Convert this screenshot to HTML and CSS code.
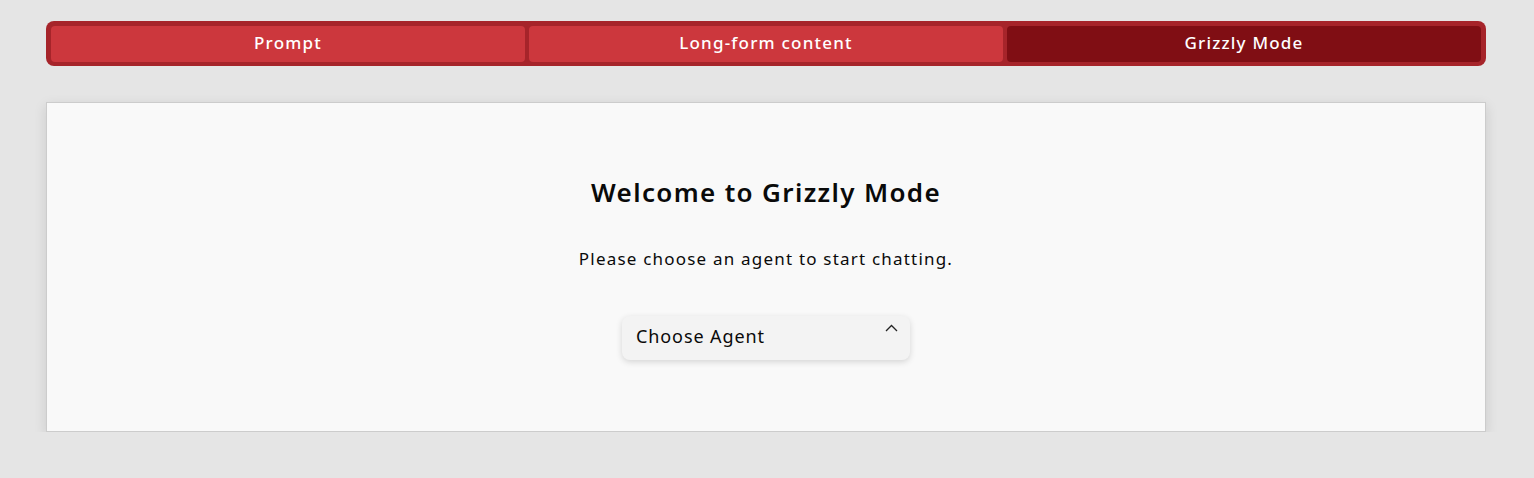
FILE: index.html
```html
<!DOCTYPE html>
<html lang="en">
<head>
<meta charset="utf-8">
<title>Grizzly Mode</title>
<link rel="stylesheet" href="styles.css">
</head>
<body>
<div class="page">
  <nav class="tabs">
    <button class="tab">Prompt</button>
    <button class="tab">Long-form content</button>
    <button class="tab active">Grizzly Mode</button>
  </nav>
  <section class="card">
    <h2 class="title">Welcome to Grizzly Mode</h2>
    <p class="subtitle">Please choose an agent to start chatting.</p>
    <div class="select">
      <span class="select-label">Choose Agent</span>
      <svg class="chevron" width="13" height="8" viewBox="0 0 13 8" fill="none" stroke="#222" stroke-width="1.3"><path d="M1 7 L6.5 1.5 L12 7"/></svg>
    </div>
  </section>
</div>
</body>
</html>
```
FILE: styles.css
```css
html, body {
  margin: 0;
  padding: 0;
  background: #e5e5e5;
  font-family: "Noto Sans", "Open Sans", sans-serif;
}
.page {
  padding: 21px 48px 0 46px;
}
.tabs {
  display: flex;
  gap: 4px;
  padding: 5px 5px 4px 5px;
  background: #a6242a;
  border-radius: 8px;
}
.tab {
  flex: 1;
  height: 36px;
  padding: 0 0 3px;
  border: none;
  border-radius: 4px;
  background: #cc373d;
  color: #ffffff;
  font-family: inherit;
  font-size: 17px;
  font-weight: 500;
  letter-spacing: 1.2px;
  cursor: pointer;
}
.tab.active {
  background: #800e14;
}
.card {
  margin-top: 36px;
  background: #f9f9f9;
  border: 1px solid #cccccc;
  box-shadow: 0 4px 12px rgba(0,0,0,0.12);
  display: flex;
  flex-direction: column;
  align-items: center;
  padding: 73px 0 71px;
}
.title {
  margin: 0;
  font-size: 26px;
  line-height: 32px;
  font-weight: 600;
  letter-spacing: 1.35px;
  color: #0a0a0a;
}
.subtitle {
  margin: 39px 0 0;
  font-size: 17px;
  line-height: 24px;
  letter-spacing: 1.2px;
  color: #0a0a0a;
}
.select {
  position: relative;
  margin-top: 45px;
  width: 288px;
  height: 44px;
  box-sizing: border-box;
  padding: 0 14px 4px;
  display: flex;
  align-items: center;
  background: #f3f3f3;
  border-radius: 8px;
  box-shadow: 0 2px 6px rgba(0,0,0,0.15);
}
.select-label {
  font-size: 18px;
  letter-spacing: 0.9px;
  color: #0a0a0a;
}
.chevron {
  position: absolute;
  top: 8px;
  right: 12px;
}
```
